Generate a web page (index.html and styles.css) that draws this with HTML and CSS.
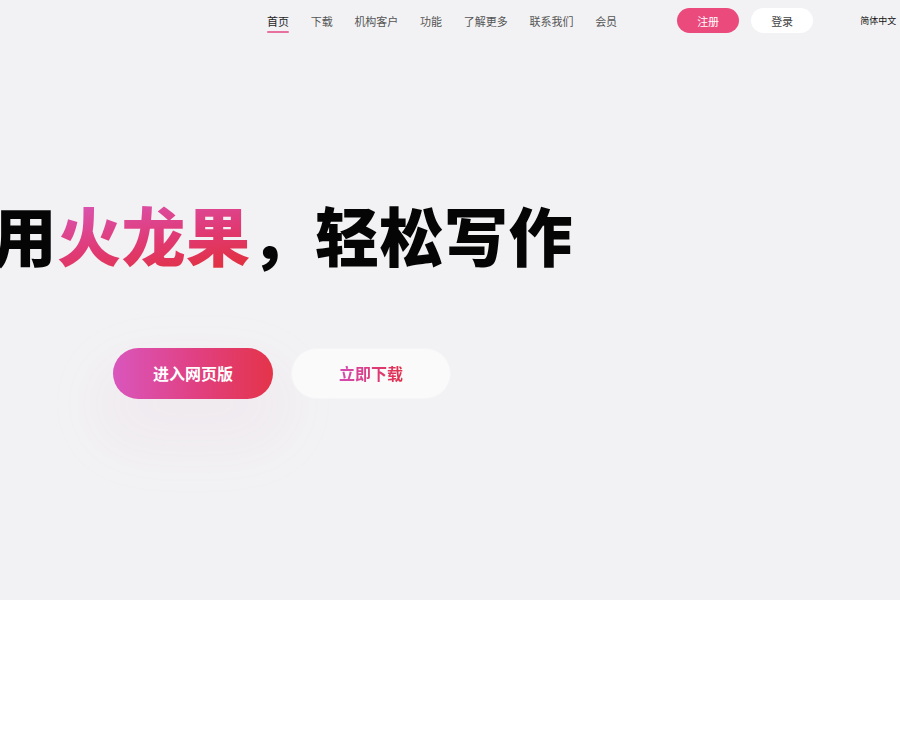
FILE: index.html
```html
<!DOCTYPE html>
<html lang="zh-CN">
<head>
<meta charset="utf-8">
<title>火龙果</title>
<link rel="stylesheet" href="styles.css">
</head>
<body>
<div class="top">
  <header class="header">
    <nav class="nav">
      <a class="nav-item active">首页</a>
      <a class="nav-item">下载</a>
      <a class="nav-item">机构客户</a>
      <a class="nav-item">功能</a>
      <a class="nav-item">了解更多</a>
      <a class="nav-item">联系我们</a>
      <a class="nav-item">会员</a>
    </nav>
    <div class="auth">
      <a class="btn-reg">注册</a>
      <a class="btn-login">登录</a>
    </div>
    <div class="lang">简体中文</div>
  </header>
  <section class="hero">
    <h1 class="title">使用<span class="grad">火龙果</span>，轻松写作</h1>
    <div class="actions">
      <a class="btn-web">进入网页版</a>
      <a class="btn-dl"><span class="grad-text">立即下载</span></a>
    </div>
  </section>
</div>
<section class="below"></section>
</body>
</html>
```

FILE: styles.css
```css
* { box-sizing: border-box; }
html, body { margin: 0; padding: 0; }
body {
  font-family: "Noto Sans CJK SC", "Noto Sans", sans-serif;
  background: #ffffff;
  overflow-x: hidden;
}
a { text-decoration: none; cursor: pointer; }

.top {
  background: #f2f2f4;
  height: 600px;
  overflow: hidden;
}

.header {
  display: flex;
  align-items: center;
  height: 41px;
}
.nav {
  display: flex;
  gap: 21.7px;
  margin-left: 267px;
}
.nav-item {
  position: relative;
  font-size: 11px;
  line-height: 16px;
  color: #555;
}
.nav-item.active { color: #1f1f1f; }
.nav-item.active::after {
  content: "";
  position: absolute;
  left: 0;
  right: 0;
  bottom: -4px;
  height: 2px;
  border-radius: 1px;
  background: #e8709f;
}

.auth {
  display: flex;
  gap: 12px;
  margin-left: 60px;
}
.btn-reg, .btn-login {
  display: flex;
  align-items: center;
  justify-content: center;
  width: 62px;
  height: 25px;
  border-radius: 13px;
  font-size: 11px;
}
.btn-reg { background: #eb4a7d; color: #fff; }
.btn-login { background: #fff; color: #444; }

.lang {
  margin-left: 47px;
  font-size: 9px;
  color: #111;
}

.hero {
  padding-top: 154px;
}
.title {
  margin: 0 0 0 -72px;
  font-size: 64px;
  line-height: 76px;
  font-weight: 900;
  color: #050505;
  white-space: nowrap;
  letter-spacing: 0.5px;
}
.grad {
  background: linear-gradient(170deg, #d760cb 0%, #e03a76 55%, #e22d2c 100%);
  -webkit-background-clip: text;
  background-clip: text;
  color: transparent;
}

.actions {
  display: flex;
  gap: 18px;
  margin: 77px 0 0 113px;
}
.btn-web, .btn-dl {
  display: flex;
  align-items: center;
  justify-content: center;
  width: 160px;
  height: 51px;
  border-radius: 26px;
  font-size: 16px;
  font-weight: 700;
  padding-bottom: 2px;
}
.btn-web {
  background: linear-gradient(90deg, #d956bd 0%, #e13f7e 55%, #e4344a 100%);
  color: #fff;
  box-shadow: 0 30px 60px 20px rgba(215, 120, 170, 0.06);
}
.btn-dl {
  background: #fafafb;
  border: 1px solid #f5f5f7;
}
.grad-text {
  background: linear-gradient(90deg, #d44ab4, #e2304a);
  -webkit-background-clip: text;
  background-clip: text;
  color: transparent;
}

.below {
  height: 150px;
  background: #fff;
}
```
